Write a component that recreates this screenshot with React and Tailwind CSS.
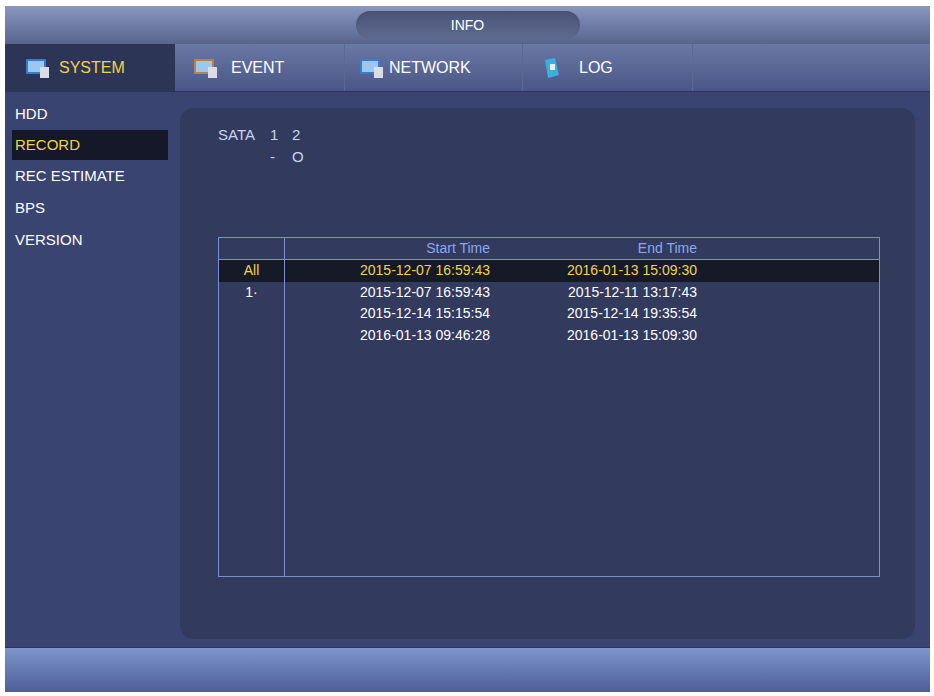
export default function App() {
  const rows = [
    ["All", "2015-12-07 16:59:43", "2016-01-13 15:09:30", true],
    ["1\u00b7", "2015-12-07 16:59:43", "2015-12-11 13:17:43"],
    ["", "2015-12-14 15:15:54", "2015-12-14 19:35:54"],
    ["", "2016-01-13 09:46:28", "2016-01-13 15:09:30"],
  ];
  const Icon = ({ c }) => (
    <svg width="26" height="22" viewBox="0 0 26 22">
      <rect x="1" y="2" width="20" height="15" rx="1" fill={c} />
      <rect x="3" y="4" width="16" height="11" fill="#9cc8f0" />
      <rect x="15" y="10" width="9" height="11" fill="#d8dde8" />
    </svg>
  );
  return (
    <div className="w-[934px] h-[696px] bg-white pt-[6px] pl-[5px] pr-[4px] pb-[4px]" style={{ fontFamily: "'Liberation Sans', Arial, sans-serif" }}>
      <div className="w-full h-full flex flex-col bg-[#3a4470]">
        <div className="h-[38px] shrink-0 flex items-center justify-center bg-gradient-to-b from-[#8a98c0] to-[#56648e]">
          <div className="w-[224px] h-[28px] rounded-full bg-gradient-to-b from-[#4a5478] to-[#5f6a90] flex items-center justify-center text-[14px] text-white shadow-inner">INFO</div>
        </div>
        <div className="h-[48px] shrink-0 flex bg-gradient-to-b from-[#6a78a4] to-[#4a5786] border-b border-[#2c3458] text-[16px]">
          <div className="w-[170px] bg-[#2d3556] flex items-center gap-2 pl-[20px] text-[#f0d44a]"><Icon c="#3a7bd0" />SYSTEM</div>
          <div className="w-[170px] flex items-center gap-3 pl-[18px] text-white border-r border-[#5a6894]"><Icon c="#c08040" />EVENT</div>
          <div className="w-[178px] flex items-center gap-1 pl-[14px] text-white border-r border-[#5a6894]"><Icon c="#3a7bd0" />NETWORK</div>
          <div className="w-[170px] flex items-center gap-4 pl-[20px] text-white border-r border-[#5a6894]">
            <svg width="20" height="22" viewBox="0 0 20 22"><path d="M2 3 L12 1 L16 18 L5 21 Z" fill="#3ab0e0" /><rect x="7" y="7" width="5" height="6" fill="#e8eef8" /></svg>LOG
          </div>
        </div>
        <div className="flex-1 flex min-h-0">
          <div className="w-[175px] shrink-0 pt-[6px] text-white text-[15px]">
            <div className="pl-[10px] h-[32px] flex items-center">HDD</div>
            <div className="ml-[7px] mr-[12px] pl-[3px] h-[30px] flex items-center bg-[#141828] text-[#f0d44a]">RECORD</div>
            <div className="pl-[10px] h-[32px] flex items-center">REC ESTIMATE</div>
            <div className="pl-[10px] h-[32px] flex items-center">BPS</div>
            <div className="pl-[10px] h-[32px] flex items-center">VERSION</div>
          </div>
          <div className="flex-1 mt-[16px] mb-[8px] mr-[15px] rounded-[14px] bg-[#323a5e] pl-[38px] pr-[35px] pt-[16px] flex flex-col">
            <div className="text-[#c8d4f4] text-[15px]">
              <div className="flex h-[22px] items-center"><span className="w-[52px]">SATA</span><span className="w-[22px]">1</span><span>2</span></div>
              <div className="flex h-[22px] items-center"><span className="w-[52px]"></span><span className="w-[22px]">-</span><span>O</span></div>
            </div>
            <div className="mt-[69px] h-[340px] border border-[#7a90d0] flex flex-col relative text-[14px]">
              <div className="absolute left-[65px] top-0 bottom-0 w-px bg-[#7a90d0]"></div>
              <div className="h-[22px] flex items-center border-b border-[#7a90d0] text-[#8aa8f0]">
                <span className="w-[65px]"></span>
                <span className="w-[206px] text-right">Start Time</span>
                <span className="w-[207px] text-right">End Time</span>
              </div>
              {rows.map((r, i) => (
                <div key={i} className={"h-[21.5px] flex items-center " + (r[3] ? "bg-[#161a28] text-[#f0d44a]" : "text-white")}>
                  <span className="w-[65px] text-center">{r[0]}</span>
                  <span className="w-[206px] text-right">{r[1]}</span>
                  <span className="w-[207px] text-right">{r[2]}</span>
                </div>
              ))}
            </div>
          </div>
        </div>
        <div className="h-[45px] shrink-0 border-t border-[#2c3458] bg-gradient-to-b from-[#7e96cc] to-[#4e5e98]"></div>
      </div>
    </div>
  );
}
